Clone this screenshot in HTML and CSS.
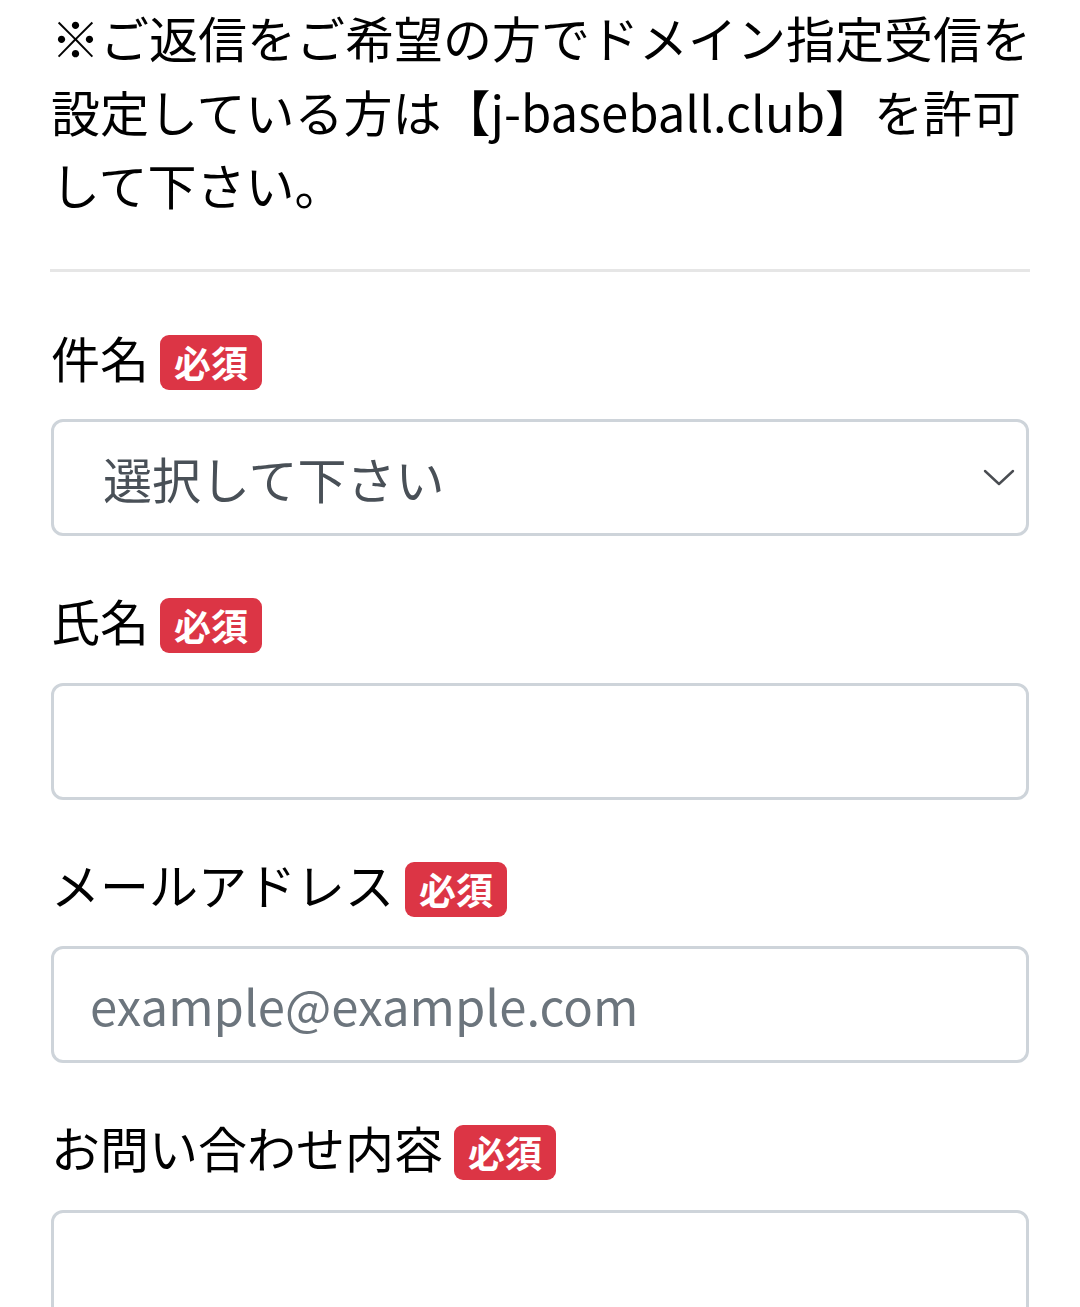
FILE: index.html
```html
<!DOCTYPE html>
<html lang="ja">
<head>
<meta charset="utf-8">
<title>お問い合わせ</title>
<link rel="stylesheet" href="styles.css">
</head>
<body>
<main class="page">
  <p class="notice">※ご返信をご希望の方でドメイン指定受信を設定している方は【j-baseball.club】を許可して下さい。</p>
  <hr class="divider">
  <form class="form">
    <div class="group">
      <label class="label" for="subject">件名 <span class="badge">必須</span></label>
      <div class="select-wrap">
        <select class="control select" id="subject">
          <option>選択して下さい</option>
        </select>
        <svg class="chevron" width="32" height="18" viewBox="0 0 32 18" aria-hidden="true">
          <polyline points="2,2 16,15 30,2" fill="none" stroke="#4a4d52" stroke-width="2.4" stroke-linecap="round" stroke-linejoin="round"/>
        </svg>
      </div>
    </div>
    <div class="group">
      <label class="label" for="name">氏名 <span class="badge">必須</span></label>
      <input class="control" id="name" type="text">
    </div>
    <div class="group">
      <label class="label" for="email">メールアドレス <span class="badge">必須</span></label>
      <input class="control" id="email" type="email" placeholder="example@example.com">
    </div>
    <div class="group">
      <label class="label" for="body">お問い合わせ内容 <span class="badge">必須</span></label>
      <textarea class="control textarea" id="body"></textarea>
    </div>
  </form>
</main>
</body>
</html>
```

FILE: styles.css
```css
html, body {
  margin: 0;
  padding: 0;
  background: #ffffff;
}

body {
  font-family: "Noto Sans CJK JP", "Noto Sans", sans-serif;
  font-size: 49px;
  line-height: 1.5;
  color: #000000;
}

.page {
  padding: 0 51px;
}

.notice {
  margin: 0 -6px 0 0;
}

.divider {
  border: 0;
  border-top: 3px solid #e6e6e6;
  margin: 48px -1px 48px -1px;
  height: 0;
}

.form {
  display: block;
}

.group {
  margin-bottom: 47px;
}

.label {
  display: block;
  margin-bottom: 26px;
  white-space: nowrap;
}

.badge {
  display: inline-block;
  background: #dc3545;
  color: #ffffff;
  font-weight: 700;
  font-size: 37px;
  line-height: 1;
  padding: 9px 14px;
  border-radius: 9px;
  vertical-align: baseline;
}

.control {
  display: block;
  box-sizing: border-box;
  width: 100%;
  height: 117px;
  margin: 0;
  padding: 0 36px;
  border: 3px solid #ced4da;
  border-radius: 12px;
  background: #ffffff;
  font-family: "Noto Sans CJK JP", "Noto Sans", sans-serif;
  font-size: 49px;
  line-height: 1.5;
  color: #495057;
  outline: none;
}

.control::placeholder {
  color: #6c757d;
  opacity: 1;
}

.select-wrap {
  position: relative;
}

.select {
  -webkit-appearance: none;
  appearance: none;
  padding: 0 80px 0 49px;
  color: #495057;
}

.chevron {
  position: absolute;
  right: 14px;
  top: 50%;
  margin-top: -9px;
  pointer-events: none;
}

.textarea {
  height: 320px;
  resize: none;
  padding: 18px 36px;
}
```
